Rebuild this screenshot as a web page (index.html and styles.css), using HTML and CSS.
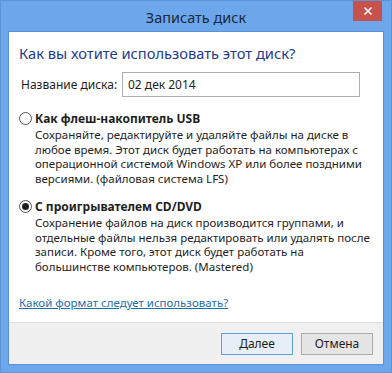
FILE: index.html
```html
<!DOCTYPE html>
<html lang="ru">
<head>
<meta charset="utf-8">
<title>Записать диск</title>
<link rel="stylesheet" href="styles.css">
</head>
<body>
<div class="window">
  <div class="titlebar">
    <span class="title">Записать диск</span>
    <div class="close">
      <svg width="10" height="10" viewBox="0 0 10 10"><path d="M1.5 1.5 L8.5 8.5 M8.5 1.5 L1.5 8.5" stroke="#fff" stroke-width="1.6" fill="none"/></svg>
    </div>
  </div>
  <div class="client">
    <div class="content">
      <div class="heading">Как вы хотите использовать этот диск?</div>
      <div class="name-row">
        <span class="label">Название диска:</span>
        <div class="input">02 дек 2014</div>
      </div>
      <div class="option">
        <div class="option-head"><span class="radio"></span><span class="option-title">Как флеш-накопитель USB</span></div>
        <div class="desc">Сохраняйте, редактируйте и удаляйте файлы на диске в любое время. Этот диск будет работать на компьютерах с операционной системой Windows XP или более поздними версиями. (файловая система LFS)</div>
      </div>
      <div class="option">
        <div class="option-head"><span class="radio checked"></span><span class="option-title">С проигрывателем CD/DVD</span></div>
        <div class="desc">Сохранение файлов на диск производится группами, и отдельные файлы нельзя редактировать или удалять после записи. Кроме того, этот диск будет работать на большинстве компьютеров. (Mastered)</div>
      </div>
      <a class="link" href="#">Какой формат следует использовать?</a>
    </div>
    <div class="footer">
      <div class="btn default">Далее</div>
      <div class="btn">Отмена</div>
    </div>
  </div>
</div>
</body>
</html>
```
FILE: styles.css
```css
* { box-sizing: border-box; }
html, body { margin: 0; padding: 0; }
body {
  font-family: "Noto Sans", "Open Sans", sans-serif;
  color: #1e1e1e;
  width: 392px;
  height: 373px;
  overflow: hidden;
}
.window {
  width: 392px;
  height: 373px;
  background: #6ca7ec;
  border: 1px solid #5a93d8;
  display: flex;
  flex-direction: column;
}
.titlebar {
  height: 30px;
  position: relative;
  display: flex;
  justify-content: center;
  align-items: center;
  padding-top: 1px;
}
.title {
  font-size: 14.5px;
  color: #1b2838;
}
.close {
  position: absolute;
  right: 9px;
  top: 0;
  width: 29px;
  height: 20px;
  background: #c9514b;
  display: flex;
  align-items: center;
  justify-content: center;
}
.client {
  flex: 1;
  margin: 0 7px 7px;
  border: 1px solid #5b91d2;
  display: flex;
  flex-direction: column;
}
.content {
  flex: 1;
  background: #fff;
  padding: 11px 10px 0 10px;
}
.heading {
  font-size: 14.7px;
  line-height: 20px;
  color: #1f3a8e;
}
.name-row {
  display: flex;
  align-items: center;
  margin-top: 9px;
}
.label {
  font-size: 12px;
  width: 103px;
  padding-left: 2px;
}
.input {
  width: 238px;
  height: 25px;
  border: 1px solid #adadad;
  font-size: 12px;
  line-height: 23px;
  padding-left: 5px;
}
.option { margin-top: 12px; }
.option + .option { margin-top: 11px; }
.option-head {
  display: flex;
  align-items: center;
  height: 18px;
}
.radio {
  width: 13px;
  height: 13px;
  border: 1px solid #555;
  border-radius: 50%;
  background: #fff;
  margin-right: 3px;
  display: flex;
  align-items: center;
  justify-content: center;
}
.radio.checked::after {
  content: "";
  width: 7px;
  height: 7px;
  border-radius: 50%;
  background: #1e1e1e;
}
.option-title {
  font-size: 12px;
  font-weight: bold;
}
.desc {
  margin-left: 16px;
  font-size: 11.5px;
  line-height: 14.5px;
  margin-top: 1px;
}
.link {
  display: inline-block;
  margin-top: 21px;
  font-size: 11.5px;
  line-height: 16px;
  color: #1e6ea8;
  text-decoration: underline;
}
.footer {
  height: 42px;
  background: #f0f0f0;
  border-top: 1px solid #dfdfdf;
  display: flex;
  justify-content: flex-end;
  align-items: center;
  gap: 8px;
  padding-right: 10px;
}
.btn {
  width: 72px;
  height: 22px;
  border: 1px solid #acacac;
  background: #e5e5e5;
  font-size: 12px;
  display: flex;
  align-items: center;
  justify-content: center;
}
.btn.default {
  border-color: #5aa0de;
  background: #e7eef6;
}
```
